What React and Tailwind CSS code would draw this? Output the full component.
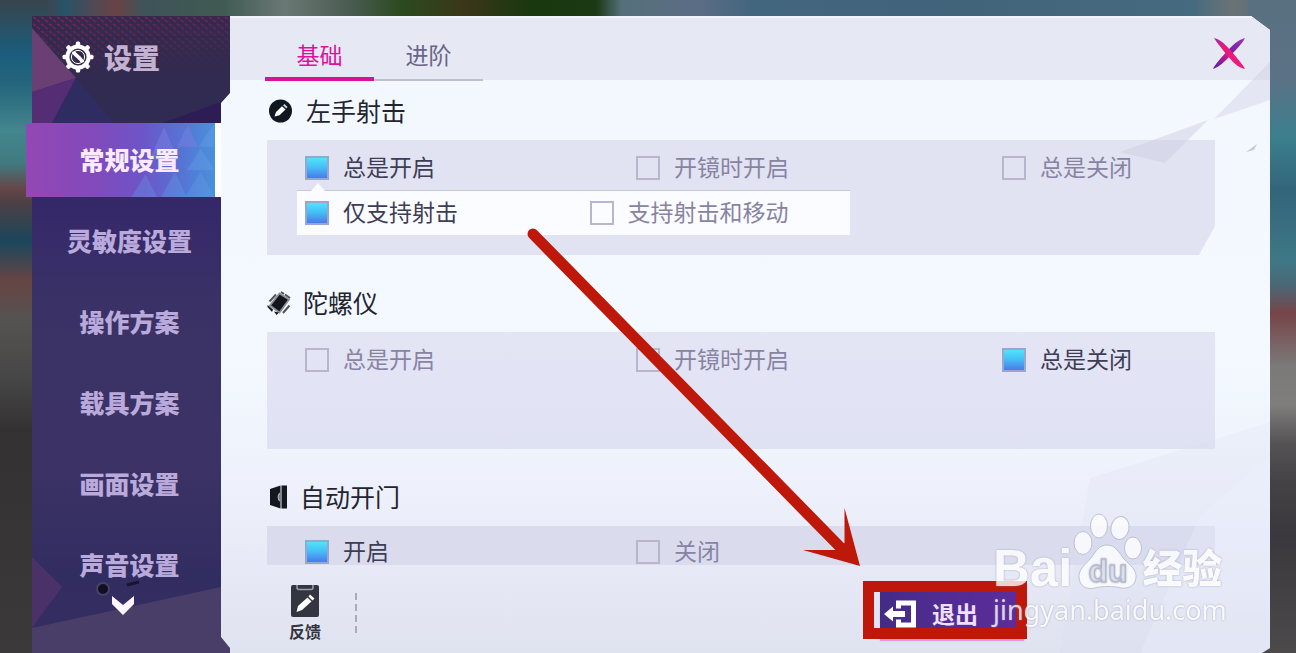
import React from "react";

const NAV = ["常规设置", "灵敏度设置", "操作方案", "载具方案", "画面设置", "声音设置"];

function Backdrop() {
  return (
    <div aria-hidden="true" className="absolute inset-0 -z-10 bg-[#3a393b]">
      <div className="absolute inset-x-0 top-0 h-6 bg-[linear-gradient(90deg,#27566c_0%,#4a3d46_3%,#265468_5%,#4c4a55_7%,#6a4245_9%,#3f5358_11%,#3f5a52_17%,#6a7874_22%,#4a5c52_27%,#2b4a20_31%,#3b3619_36%,#18380f_41%,#1b3a14_46%,#55707a_48%,#5c6c85_54%,#43667f_58%,#41647b_74%,#466a80_92%,#6a7376_95%,#4e6a7c_100%)]" />
      <div className="absolute left-0 top-0 h-full w-12 bg-[linear-gradient(180deg,#38454c_0%,#1b5c7c_8%,#25667c_13%,#43868d_20%,#417a80_25%,#664548_29%,#4d4044_31%,#1b465c_37%,#664543_43%,#555352_49%,#474646_58%,#333132_66%,#3b3939_100%)]" />
      <div className="absolute right-0 top-0 h-full w-12 bg-[linear-gradient(180deg,#58707f_0%,#5b7286_12%,#3b7f8d_21%,#33657b_29%,#3e7886_40%,#4d6573_44%,#774548_48%,#7c7979_56%,#807d7d_62%,#555254_68%,#444245_74%,#3a383c_82%,#4d4a4c_100%)]" />
    </div>
  );
}

function SidebarArt() {
  return (
    <svg aria-hidden="true" viewBox="0 0 198 637" preserveAspectRatio="none" className="absolute left-[6px] top-0 -z-10 h-full w-[198px]">
      <defs>
        <linearGradient id="side" x1="0" y1="0" x2="0" y2="1">
          <stop offset="0" stopColor="#342a4c" />
          <stop offset="0.15" stopColor="#302b52" />
          <stop offset="0.3" stopColor="#35286a" />
          <stop offset="0.45" stopColor="#3a3266" />
          <stop offset="0.7" stopColor="#3c3265" />
          <stop offset="0.88" stopColor="#322d61" />
          <stop offset="1" stopColor="#352d62" />
        </linearGradient>
        <linearGradient id="fade" x1="0" y1="0" x2="0.3" y2="1">
          <stop offset="0" stopColor="#fff" />
          <stop offset="1" stopColor="#fff" stopOpacity="0" />
        </linearGradient>
        <mask id="dotMask"><rect width="198" height="62" fill="url(#fade)" /></mask>
        <pattern id="dots" width="8" height="7" patternUnits="userSpaceOnUse">
          <path d="M1 1l3 2M5 4l3 2" stroke="#b31c66" strokeWidth="1.6" />
        </pattern>
      </defs>
      <rect width="198" height="637" fill="url(#side)" />
      <rect width="198" height="62" fill="url(#dots)" mask="url(#dotMask)" opacity="0.6" />
      <path d="M0 12L44 62L0 76Z" fill="#6a3f74" />
      <path d="M0 76L44 62L20 107H0Z" fill="#552d74" />
      <path d="M44 62L82 107H20Z" fill="#2f2c62" />
      <path d="M130 107L189 86V107Z" fill="#2e1c55" />
      <path d="M0 541L30 571L0 612Z" fill="#4a3168" />
      <path d="M0 612L189 571L198 637H0Z" fill="#483e67" />
      <path d="M189 565L198 637H185Z" fill="#483e67" />
      <circle cx="71" cy="573" r="6" fill="#111022" stroke="#46406a" strokeWidth="2" />
      <path d="M95 569l12-3" stroke="#17152e" strokeWidth="3" />
    </svg>
  );
}

function GearIcon() {
  const teeth = [0, 45, 90, 135, 180, 225, 270, 315];
  return (
    <svg aria-hidden="true" viewBox="0 0 32 32" className="size-8">
      {teeth.map((a) => (
        <rect key={a} x="13.8" y="0.5" width="4.4" height="6" rx="1.5" fill="#fff" transform={`rotate(${a} 16 16)`} />
      ))}
      <circle cx="16" cy="16" r="10.6" fill="none" stroke="#fff" strokeWidth="4" />
      <path d="M11.500 10.500C12.500 14.500 19 16.500 20.500 21.500" fill="none" stroke="#fff" strokeWidth="3.600" />
      <circle cx="16" cy="16" r="6.600" fill="none" stroke="#fff" strokeWidth="1" />
    </svg>
  );
}

function Sidebar() {
  return (
    <aside className="relative z-0 w-[195px] shrink-0">
      <SidebarArt />
      <header className="flex h-[107px] items-start gap-2.5 pl-9 pt-[25px]">
        <GearIcon />
        <h1 className="text-[28px] font-black leading-8 text-[#c3b1d2]">设置</h1>
      </header>
      <nav className="flex flex-col gap-[7px]">
        {NAV.map((name, i) =>
          i === 0 ? (
            <button key={name} type="button" aria-current="page" className="relative h-[74px] border-r-[6px] border-white bg-[linear-gradient(90deg,#9348b4_0%,#8349ba_35%,#6c55c8_62%,#5378d6_85%,#4a91dc_100%)] pl-[18px] text-[25px] font-black text-[#fbeaff]">
              <svg aria-hidden="true" viewBox="0 0 84 75" className="absolute right-0 top-0 h-full w-[84px]">
                <path d="M18 37L33 4L47 37Z M46 24L57 2L67 24Z" fill="#7a7ee0" opacity=".5" />
                <path d="M30 75L44 50L56 75Z M54 75L70 50L84 75Z M0 75L14 52L26 75Z" fill="#67a2e8" opacity=".3" />
                <path d="M56 48L70 26L84 48Z M68 24L84 0V24Z" fill="#6da4ea" opacity=".3" />
              </svg>
              <span className="relative">{name}</span>
            </button>
          ) : (
            <button key={name} type="button" className="h-[74px] border-r-[6px] border-transparent pl-[18px] text-[25px] font-black text-[#b9aadb]">{name}</button>
          )
        )}
      </nav>
      <button type="button" aria-label="更多" className="absolute bottom-[37px] left-[86px]">
        <svg viewBox="0 0 22 20" className="h-5 w-[22px]"><path d="M0 0l11 9L22 0v8L11 19L0 8Z" fill="#fff4ff" /></svg>
      </button>
    </aside>
  );
}

function Choice({ group, label, checked }) {
  return (
    <label className={checked ? "flex h-6 items-center gap-3.5 text-[23px] leading-6 text-[#3f3d55]" : "flex h-6 items-center gap-3.5 text-[23px] leading-6 text-[#8983a3]"}>
      <input
        type="radio"
        name={group}
        defaultChecked={checked}
        className="size-6 shrink-0 appearance-none border-2 border-[#b9b5cc] checked:border-[#98a6d0] checked:bg-[linear-gradient(180deg,#52e3fb_0%,#46c5f6_40%,#4a7bea_100%)]"
      />
      <span className="whitespace-nowrap pb-1">{label}</span>
    </label>
  );
}

function Heading({ icon, children }) {
  return (
    <h2 className="flex h-[60px] items-center gap-3 pt-0.5 text-[25px] text-[#24242f]">
      {icon}
      {children}
    </h2>
  );
}

const ROW = "grid grid-cols-[331fr_366fr_213fr] pl-[38px]";

function HandIcon() {
  return (
    <svg aria-hidden="true" viewBox="0 0 27 24" className="h-6 w-[27px]">
      <circle cx="13.500" cy="12" r="11.500" fill="#111720" />
      <path d="M7.500 17.500L9 13L15 7.200L18.500 10.500L12.500 16.300Z" fill="#fff" />
      <path d="M16 6.300l1.500-1.300 3 3-1.200 1.500Z" fill="#cfd5dd" />
    </svg>
  );
}

function GyroIcon() {
  return (
    <svg aria-hidden="true" viewBox="0 0 24 24" className="size-6">
      <path d="M2.500 10.500L9 3.500M14 1l3 2M16 22L22.500 14.500M18 3.500l5 3.500" stroke="#50545e" strokeWidth="2" fill="none" />
      <path d="M3 14.500L12.500 2.500L22 8.500L12.500 21.500Z" fill="#11151c" stroke="#8b8e97" strokeWidth="1.800" />
      <path d="M.5 14l5.500 4.500-1 2.500-4.500-5ZM7 20.500l5 1-2.500 2.500Z" fill="#15181f" />
    </svg>
  );
}

function DoorIcon() {
  return (
    <svg aria-hidden="true" viewBox="0 0 21 24" className="h-6 w-[21px]">
      <path d="M3 4L13.500 .5V23.500L3 20Z M14.500 .5h5.500v23h-5.500Z" fill="#15171f" />
      <path d="M13 8c-2.500 2-2.500 6 0 8" fill="#777a85" stroke="#a9abb5" strokeWidth="1.200" />
    </svg>
  );
}

function Panel() {
  return (
    <main className="relative z-10 flex min-w-0 flex-1 flex-col bg-[linear-gradient(180deg,#f3f8ff_0%,#f3f9ff_55%,#eceffa_78%,#dfe2ef_100%)] [clip-path:polygon(9px_0,calc(100%-19px)_0,100%_14px,100%_calc(100%-5px),calc(100%-8px)_100%,9px_100%,9px_calc(100%-5px),0_calc(100%-16px),0_87px,9px_77px)]">
      <div role="tablist" className="flex h-16 border-t-2 border-[#f3f4fb] bg-[#e6e8f3] pl-11">
        <button type="button" role="tab" aria-selected="true" className="w-[109px] pt-5 text-[23px] leading-8 text-[#dc129d]">
          <span className="block h-[43px] border-b-4 border-[#d4129d]">基础</span>
        </button>
        <button type="button" role="tab" aria-selected="false" className="w-[109px] pt-5 text-[23px] leading-8 text-[#6b6589]">
          <span className="block h-[43px] border-b-2 border-[#c1bed0]">进阶</span>
        </button>
        <button type="button" aria-label="关闭" className="ml-auto mr-[25px] mt-[19px] size-8">
          <svg viewBox="0 0 32 32" className="size-8">
            <defs>
              <linearGradient id="xa" x1="0" y1="1" x2="1" y2="0"><stop offset="0" stopColor="#4a22a6" /><stop offset=".5" stopColor="#d81688" /><stop offset=".6" stopColor="#7b22a8" /><stop offset="1" stopColor="#9a35b0" /></linearGradient>
              <linearGradient id="xb" x1="0" y1="0" x2="1" y2="1"><stop offset="0" stopColor="#9a2bb0" /><stop offset=".3" stopColor="#e91879" /><stop offset="1" stopColor="#ee1b80" /></linearGradient>
            </defs>
            <path d="M0 32C2.500 27 7 22 13.800 14.500C19.500 8 25 3 32 1C29 7 24 11.500 17.500 18.500C11.500 25 6 30 0 32Z" fill="url(#xa)" />
            <path d="M1 1C7.500 2.500 13 8 18 14C24 21 29.500 27 32 32C25 30.500 20 25.500 14.300 18.500C8.500 11 4.500 6.500 1 1Z" fill="url(#xb)" />
          </svg>
        </button>
      </div>

      <div className="relative pl-[46px] pr-[55px]">
        <section>
          <Heading icon={<HandIcon />}>左手射击</Heading>
          <div className="min-h-[115px] bg-[#e1e3f3] pt-4 [clip-path:polygon(0_0,100%_0,100%_86px,calc(100%-16px)_100%,0_100%)]">
            <div className={ROW}>
              <Choice group="lefthand" label="总是开启" checked />
              <Choice group="lefthand" label="开镜时开启" />
              <Choice group="lefthand" label="总是关闭" />
            </div>
            <div className="relative ml-[30px] mt-2.5 grid h-[45px] w-7/12 grid-cols-[284fr_260fr] items-center border-t border-[#c9cad8] bg-[#fbfcff] pl-2">
              <svg aria-hidden="true" viewBox="0 0 14 8" className="absolute -top-2 left-3.5 h-2 w-3.5"><path d="M0 8L7 0L14 8Z" fill="#fbfcff" /></svg>
              <Choice group="lefthand-mode" label="仅支持射击" checked />
              <Choice group="lefthand-mode" label="支持射击和移动" />
            </div>
          </div>
        </section>
        <section className="mt-[17px]">
          <Heading icon={<GyroIcon />}>陀螺仪</Heading>
          <div className="min-h-[117px] bg-[linear-gradient(180deg,#e3e5f4_0%,#e2e4f6_50%,#dfe2f2_100%)] pt-4">
            <div className={ROW}>
              <Choice group="gyro" label="总是开启" />
              <Choice group="gyro" label="开镜时开启" />
              <Choice group="gyro" label="总是关闭" checked />
            </div>
          </div>
        </section>
        <section className="mt-[17px]">
          <Heading icon={<DoorIcon />}>自动开门</Heading>
          <div className="h-[39px] bg-[#dadcee] pt-3.5">
            <div className={ROW}>
              <Choice group="door" label="开启" checked />
              <Choice group="door" label="关闭" />
            </div>
          </div>
        </section>
      </div>

      <svg aria-hidden="true" viewBox="0 0 330 637" preserveAspectRatio="none" className="pointer-events-none absolute right-0 top-0 h-full w-[330px]">
        <path d="M330 46L274 103L330 84Z" fill="#c9c6dd" opacity=".35" />
        <path d="M268 104L180 136L225 147Z" fill="#cfcde4" opacity=".5" />
        <path d="M306 136l11-8-3 6Z" fill="#c8cad6" />
        <path d="M330 406L150 462L120 637H330Z" fill="#d5dbee" opacity=".2" />
        <path d="M330 440L260 500L200 637H330Z" fill="#eef3ff" opacity=".3" />
      </svg>

      <footer className="relative flex flex-1 items-start pl-[68px] pr-[246px] pt-5">
        <button type="button" className="flex flex-col items-center text-base font-bold leading-7 text-[#33343f]">
          <svg aria-hidden="true" viewBox="0 0 28 32" className="h-8 w-7">
            <rect width="28" height="32" y="0" rx="2" fill="#333641" />
            <path d="M6 0v2.500q0 2 2 2h12q2 0 2-2V0" fill="none" stroke="#9da0ab" strokeWidth="1.500" />
            <path d="M5.500 27L7 21L16.500 12.500L20.500 16.500L11 25Z M17.500 11.500L19 9.500L23.500 13.500L21.500 15.500Z" fill="#fff" />
          </svg>
          反馈
        </button>
        <div aria-hidden="true" className="ml-[34px] mt-2 h-[41px] w-0.5 bg-[repeating-linear-gradient(180deg,#aaacb9_0,#aaacb9_7px,transparent_7px,transparent_11px)]" />
        <div className="relative ml-auto mt-[5px]">
          <button type="button" className="flex h-[49px] w-36 items-center gap-4 bg-[linear-gradient(90deg,#432b87_0%,#502c91_40%,#5d2c9c_100%)] pb-0.5 pl-1 text-[23px] font-bold text-[#efe0ff] shadow-[0_2px_1px_#d79be9]">
            <svg aria-hidden="true" viewBox="0 0 32 28" className="h-7 w-8">
              <path d="M14.500 8.500V3H29.500V25H14.500V19.500" fill="none" stroke="#fff" strokeWidth="5" />
              <path d="M0 14L9 6.500V11H21V17H9V21.500Z" fill="#fff" />
            </svg>
            退出
          </button>
          <div aria-hidden="true" className="pointer-events-none absolute -left-[17px] -right-[3px] -top-[9px] bottom-0 border-[11px] border-[#bd1809]" />
        </div>
      </footer>
    </main>
  );
}

function Watermark() {
  return (
    <div className="pointer-events-none absolute bottom-[27px] right-[69px] z-30 w-[234px] text-white opacity-80 [text-shadow:0_0_2px_#8a8ea8]">
      <div className="flex items-end">
        <span className="mb-0.5 font-['Liberation_Sans',sans-serif] text-[51px] font-bold leading-[46px]">Bai</span>
        <svg viewBox="0 0 70 78" className="mb-1 h-[78px] w-[70px] shrink-0">
          <g fill="#fff" stroke="#b5b8c8" strokeWidth="1">
            <ellipse cx="11" cy="31" rx="9" ry="11.500" />
            <ellipse cx="27" cy="14" rx="8.500" ry="12" />
            <ellipse cx="48" cy="16" rx="9" ry="11.500" transform="rotate(12 48 16)" />
            <ellipse cx="61" cy="36" rx="8.500" ry="11" />
            <path d="M35 33C44 33 47 41 52 47C58 53 65 58 64 66C63 74 56 77 49 76C42 74 30 74 23 76C14 78 8 74 7 66C6 57 14 52 19 46C24 39 27 33 35 33Z" />
          </g>
          <text x="36" y="70" textAnchor="middle" fontFamily="Liberation Sans, sans-serif" fontWeight="700" fontSize="32" fill="#e3e6f4" stroke="#a9adc2" strokeWidth="1">du</text>
        </svg>
        <span className="mb-1.5 text-[40px] font-black leading-[44px]">经验</span>
      </div>
      <div className="font-['Noto_Sans',sans-serif] text-[27px] leading-8">jingyan.baidu.com</div>
    </div>
  );
}

export default function App() {
  return (
    <div lang="zh-CN" className="relative isolate flex min-h-screen overflow-hidden pl-[26px] pr-[26px] pt-4 font-['Noto_Sans_CJK_SC',sans-serif]">
      <Backdrop />
      <Sidebar />
      <Panel />
      <svg aria-hidden="true" viewBox="0 0 1296 653" className="pointer-events-none absolute inset-0 z-20 h-full w-full">
        <path d="M533 234L842 549" stroke="#bd1809" strokeWidth="11" strokeLinecap="round" />
        <path d="M860 566L803 550H838L844.500 543V508Z" fill="#bd1809" />
      </svg>
      <Watermark />
    </div>
  );
}
